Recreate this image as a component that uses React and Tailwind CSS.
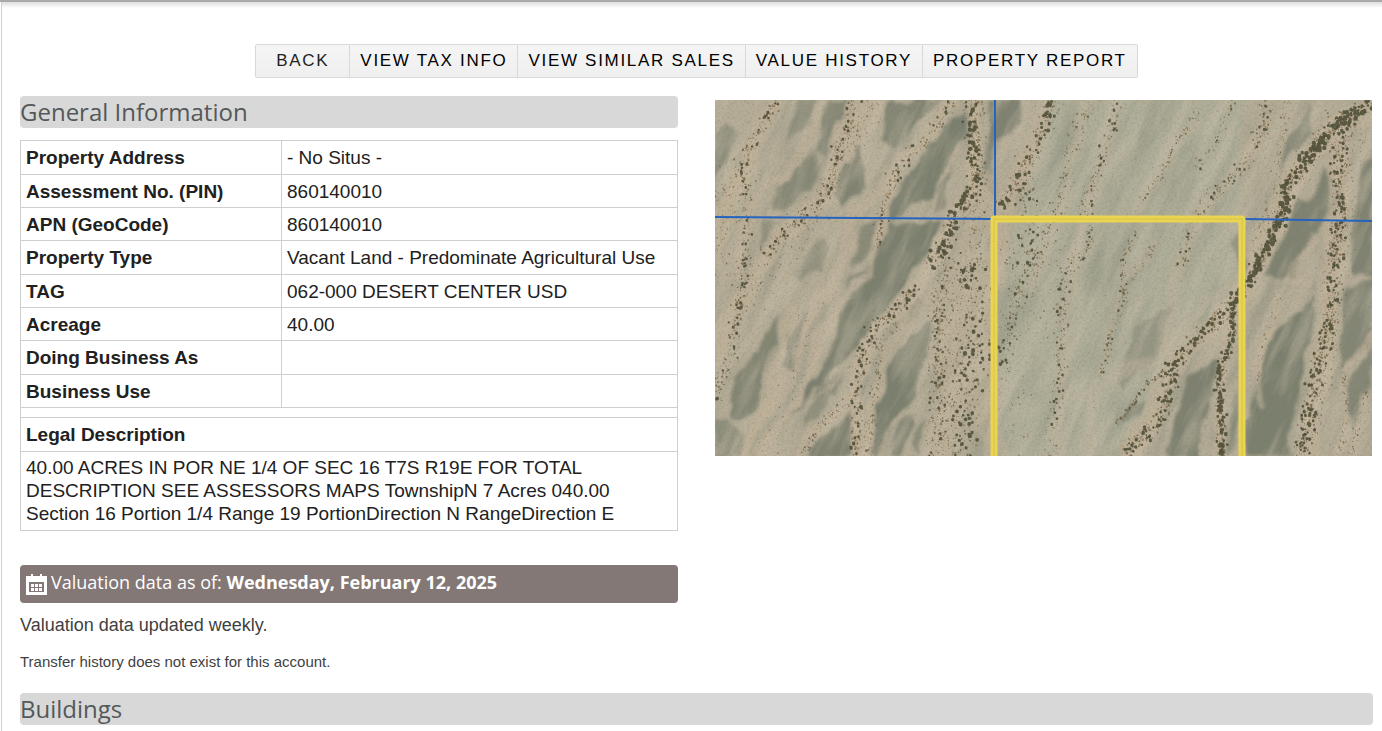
import React from 'react';

const NAV = ['BACK', 'VIEW TAX INFO', 'VIEW SIMILAR SALES', 'VALUE HISTORY', 'PROPERTY REPORT'];

const ROWS = [
  ['Property Address', '- No Situs -'],
  ['Assessment No. (PIN)', '860140010'],
  ['APN (GeoCode)', '860140010'],
  ['Property Type', 'Vacant Land - Predominate Agricultural Use'],
  ['TAG', '062-000 DESERT CENTER USD'],
  ['Acreage', '40.00'],
  ['Doing Business As', ''],
  ['Business Use', ''],
];

// Darker desert pavement between the washes: [opacity, polygon]
const PAVEMENT = [
  [0.6, '0,38 14,22 22,30 12,62 0,80'],
  [0.75, '95,47 100,67 97,87 70,113 58,112 66,87 80,70'],
  [0.7, '112,0 132,0 122,30 108,60 100,48'],
  [0.5, '84,0 100,0 92,30 72,42 78,18'],
  [0.8, '177,0 227,0 200,27 180,50 166,40'],
  [0.9, '143,43 153,67 150,87 130,110 122,94 127,70'],
  [1, '246,14 248,33 230,73 213,97 197,103 180,118 172,122 176,98 203,63 213,50'],
  [1, '172,125 233,120 213,150 193,180 178,195 133,180 157,163 167,140'],
  [0.9, '278,0 303,0 300,20 283,43 276,60'],
  [0.8, '236,74 240,60 230,105 218,112 224,90'],
  [0.5, '270,40 281,50 279,104 270,90'],
  [0.5, '95,145 112,138 110,170 88,180 78,172'],
  [0.6, '45,124 60,122 55,142 42,160'],
  [0.7, '148,124 164,122 158,148 136,168 140,140'],
  [1, '133,178 193,178 180,198 157,221 143,248 117,271 90,301 73,318 107,268 123,215'],
  [1, '215,220 212,265 200,291 167,335 160,356 152,350 163,311 170,271 187,245'],
  [0.85, '65,213 60,238 50,261 40,311 20,321 20,278 43,245'],
  [0.8, '90,208 86,235 74,270 66,268 72,230'],
  [0.9, '137,311 135,356 96,356 107,335'],
  [0.6, '105,285 130,275 120,295 90,330 88,316'],
  [0.6, '0,320 15,316 28,345 24,356 0,356'],
  [0.8, '197,312 180,330 175,356 188,356 200,328'],
  [0.7, '210,205 198,222 190,225 196,210 208,198'],
  [0.7, '212,313 212,340 202,356 200,345'],
  [0.8, '577,30 597,7 593,33 573,63 563,68'],
  [0.9, '617,70 623,100 607,133 583,157 577,180 550,180 563,133 583,107'],
  [0.9, '657,53 657,180 636,170 640,100 650,65'],
  [1, '600,195 593,245 583,285 577,321 577,356 532,356 532,305 543,278 557,238 577,215'],
  [0.95, '500,261 490,311 480,356 453,356 463,311 473,278'],
  [0.5, '457,205 447,245 403,291 407,268 420,228'],
  [0.8, '657,180 657,240 635,262 627,275 626,240 632,185'],
  [0.8, '657,245 655,290 645,320 637,340 634,300 640,270'],
  [0.7, '532,120 530,168 520,178 522,140'],
  [0.8, '522,285 522,340 512,356 515,300'],
  [0.6, '430,300 420,318 403,325 410,308'],
];

// Pale sandy channels: [width, opacity, path]
const CHANNELS = [
  [15, 0.8, 'M62 0C44 34 32 50 28 72S4 100 0 120'],
  [22, 0.7, 'M22 78C10 110 2 130 0 160'],
  [9, 0.75, 'M108 0C98 34 88 40 80 60S62 80 44 96 32 130 20 178'],
  [19, 0.8, 'M142 0C130 30 124 50 119 74S108 100 92 112 66 130 50 158 20 204 0 258'],
  [26, 0.65, 'M165 0C156 24 142 26 134 36'],
  [12, 0.75, 'M238 0C226 26 212 44 198 50S174 84 150 104 136 130 128 160 100 200 90 230 76 280 36 334 L28 356'],
  [10, 0.8, 'M178 80C170 110 166 130 158 160S128 190 112 224 100 270 82 300 58 330 44 356'],
  [15, 0.9, 'M256 0C258 26 260 50 259 74S250 104 240 112 232 140 218 164 200 184 184 206 158 222 150 252 142 290 141 356'],
  [9, 0.7, 'M220 190C200 220 168 238 166 268S158 300 150 356'],
  [9, 0.8, 'M140 290C128 310 110 318 90 344L84 356'],
  [11, 0.7, 'M75 206C66 236 64 270 48 310L32 356'],
  [30, 0.55, 'M268 80C262 140 240 200 238 260S238 320 224 356'],
  [28, 0.5, 'M282 356C260 300 264 240 274 180'],
  [18, 0.75, 'M333 0C326 34 310 60 294 98S286 140 284 180'],
  [10, 0.5, 'M376 0C360 40 350 80 344 110S330 150 316 186'],
  [11, 0.45, 'M404 0C396 50 374 90 364 140S346 220 344 356'],
  [10, 0.5, 'M480 20C450 54 444 80 424 110'],
  [14, 0.5, 'M550 20C540 58 500 90 484 118S468 160 454 220 424 250 400 278'],
  [24, 0.7, 'M657 12C620 20 612 40 590 64S574 98 560 124 544 164 524 194 480 238 460 260 446 300 432 324L416 356'],
  [20, 0.8, 'M632 20C622 62 622 90 621 120S610 200 612 228 592 300 592 356'],
  [9, 0.8, 'M515 230C502 240 508 280 505 310S508 340 500 356'],
  [8, 0.7, 'M565 194C556 220 546 250 542 270S542 300 546 302'],
  [6, 0.8, 'M657 236C640 256 628 266 630 290S632 330 622 356'],
  [8, 0.7, 'M657 270C652 300 642 320 638 356'],
  [9, 0.6, 'M600 140C588 160 576 164 574 180L590 184'],
  [8, 0.5, 'M440 140C424 170 408 178 398 220S376 290 372 356'],
  [9, 0.45, 'M520 178C490 196 470 230 450 250'],
  [3, 0.7, 'M136 270C124 284 104 296 90 308'],
  [3, 0.7, 'M200 305C186 314 174 324 166 336'],
  [2, 0.7, 'M150 30C158 60 146 84 156 92'],
  [2, 0.6, 'M90 40C102 70 98 94 96 106'],
  [4, 0.6, 'M246 50C230 62 232 90 222 110'],
];

// Shrub lines: [point list, spread, shrubs per pixel, largest radius]
const SHRUBS = [
  [[62, 0, 44, 32, 32, 48, 28, 72, 34, 110, 28, 180, 15, 260, 0, 300], 5, 1.3, 1.4],
  [[24, 60, 8, 110, 4, 180], 16, 1.1, 0.8],
  [[140, 0, 134, 28, 122, 50, 118, 76, 108, 102, 80, 122, 50, 155], 5, 1.4, 1.5],
  [[160, 0, 140, 30, 120, 80, 92, 120, 60, 160, 30, 200], 13, 1.2, 0.7],
  [[238, 0, 226, 20, 214, 38, 198, 52, 180, 74, 168, 110, 162, 150], 5, 1.2, 1.3],
  [[254, 0, 258, 26, 257, 52, 262, 72, 257, 94, 240, 112, 234, 140, 214, 166], 6, 2, 2.2],
  [[262, 0, 264, 60, 260, 110, 258, 160, 250, 185], 8, 1.2, 1.2],
  [[204, 188, 190, 200, 172, 214, 158, 228, 150, 248, 144, 270, 142, 310, 142, 356], 6, 1.7, 1.6],
  [[182, 224, 164, 244, 162, 280, 152, 356], 4, 1, 1],
  [[130, 300, 104, 326, 90, 356], 4, 1, 1],
  [[90, 210, 84, 280, 60, 320, 50, 356], 10, 0.5, 0.6],
  [[230, 150, 222, 220, 222, 280, 220, 356], 7, 1.6, 1.4],
  [[256, 160, 262, 230, 252, 290, 244, 356], 16, 1.9, 2],
  [[240, 160, 240, 260, 235, 356], 14, 1.2, 1],
  [[336, 0, 325, 32, 313, 66, 300, 86, 284, 108], 5, 1.5, 1.9],
  [[310, 80, 316, 120, 314, 170, 304, 200, 294, 230, 286, 270], 9, 1.2, 1.5],
  [[342, 0, 322, 50, 300, 98], 12, 0.8, 0.7],
  [[292, 140, 302, 180, 290, 230], 6, 0.8, 1.1],
  [[376, 0, 356, 48, 346, 100, 330, 140, 314, 180], 6, 1, 1.1],
  [[402, 0, 396, 38, 382, 74, 372, 104, 374, 144, 350, 176, 346, 236, 342, 300, 334, 356], 5, 1, 1.4],
  [[484, 12, 460, 44, 444, 78, 426, 100], 3, 0.9, 1],
  [[520, 0, 500, 42, 480, 70], 4, 0.6, 1.2],
  [[556, 0, 546, 34, 532, 62, 504, 90, 486, 114, 472, 134, 466, 168], 6, 1.2, 1.3],
  [[576, 0, 562, 58, 548, 130], 6, 0.7, 0.8],
  [[420, 130, 408, 162, 408, 200, 398, 228, 384, 280], 3, 0.9, 1.2],
  [[442, 142, 426, 164, 416, 180], 3, 0.8, 1],
  [[657, 4, 640, 12, 620, 26, 602, 46, 584, 70, 570, 84, 572, 100, 560, 128, 545, 160, 530, 186, 518, 206], 5, 3.4, 2.3],
  [[518, 204, 502, 220, 480, 240, 462, 260, 454, 280, 454, 300, 442, 326, 420, 342, 412, 356], 6, 2.4, 1.8],
  [[518, 210, 518, 242, 506, 264, 504, 300, 507, 330, 506, 356], 4, 2.6, 2],
  [[448, 270, 430, 286, 412, 312, 402, 324], 2, 1.2, 1.2],
  [[634, 12, 628, 40, 622, 70, 626, 110, 620, 150, 618, 178, 618, 210, 608, 252, 598, 290, 592, 330, 584, 356], 6, 2.4, 1.7],
  [[624, 10, 590, 70, 560, 120, 542, 160], 14, 1, 1],
  [[640, 20, 630, 120, 622, 210, 604, 300, 594, 356], 11, 0.9, 0.7],
  [[565, 196, 550, 240, 542, 280], 3, 0.4, 0.9],
  [[628, 270, 632, 310, 624, 356], 3, 0.6, 0.9],
  [[654, 280, 640, 330, 636, 356], 3, 0.7, 0.8],
  [[344, 120, 330, 200, 310, 270, 300, 356], 16, 0.3, 0.9],
];

function seeded(seed) {
  let s = seed;
  return () => {
    s = (s * 16807) % 2147483647;
    return s / 2147483647;
  };
}

function shrubPaths() {
  const rnd = seeded(4177);
  const tones = ['', '', ''];
  SHRUBS.forEach(([pts, spread, density, max]) => {
    for (let i = 0; i < pts.length - 2; i += 2) {
      const dx = pts[i + 2] - pts[i];
      const dy = pts[i + 3] - pts[i + 1];
      const len = Math.hypot(dx, dy);
      for (let n = 0; n < len * density; n++) {
        const t = rnd();
        const off = (rnd() + rnd() + rnd() - 1.5) * spread * 1.3;
        const x = pts[i] + dx * t + (off * dy) / len;
        const y = pts[i + 1] + dy * t - (off * dx) / len;
        const r = 0.4 + (max - 0.4) * Math.pow(rnd(), 2.6);
        const tone = r > 1.1 ? 0 : rnd() > 0.5 ? 1 : 2;
        const a = r.toFixed(1);
        tones[tone] += `M${(x - r).toFixed(1)} ${y.toFixed(1)}a${a} ${a} 0 1 0 ${(2 * r).toFixed(1)} 0a${a} ${a} 0 1 0-${(2 * r).toFixed(1)} 0`;
      }
    }
  });
  let fine = '';
  for (let n = 0; n < 1800; n++) {
    fine += `M${(rnd() * 657).toFixed(1)} ${(rnd() * 356).toFixed(1)}h.8v.8h-.8z`;
  }
  return { tones, fine };
}

const { tones, fine } = shrubPaths();

function ParcelMap() {
  return (
    <svg viewBox="0 0 657 356" className="block w-full" role="img" aria-label="Aerial parcel map">
      <defs>
        <filter id="rough" x="-5%" y="-5%" width="110%" height="110%" colorInterpolationFilters="sRGB">
          <feTurbulence type="fractalNoise" baseFrequency="0.045 0.025" numOctaves="4" seed="5" result="n" />
          <feDisplacementMap in="SourceGraphic" in2="n" scale="17" xChannelSelector="R" yChannelSelector="G" />
          <feGaussianBlur stdDeviation="1.5" />
        </filter>
        <filter id="soft" x="0" y="0" width="100%" height="100%">
          <feGaussianBlur stdDeviation="0.4" />
        </filter>
        <filter id="grain" x="0" y="0" width="100%" height="100%">
          <feTurbulence type="fractalNoise" baseFrequency="0.4" numOctaves="3" seed="9" />
          <feColorMatrix values="0 0 0 0 .2  0 0 0 0 .18  0 0 0 0 .13  1.6 0 0 0 -.65" />
        </filter>
        <filter id="wisps" x="0" y="0" width="100%" height="100%">
          <feTurbulence type="fractalNoise" baseFrequency="0.06 0.012" numOctaves="4" seed="14" />
          <feColorMatrix values="0 0 0 0 .6  0 0 0 0 .53  0 0 0 0 .41  3.4 0 0 0 -1.5" />
        </filter>
        <filter id="hollows" x="0" y="0" width="100%" height="100%">
          <feTurbulence type="fractalNoise" baseFrequency="0.045 0.01" numOctaves="4" seed="31" />
          <feColorMatrix values="0 0 0 0 .24  0 0 0 0 .26  0 0 0 0 .2  3.4 0 0 0 -1.6" />
        </filter>
        <clipPath id="frame">
          <rect width="657" height="356" />
        </clipPath>
      </defs>
      <g clipPath="url(#frame)">
        <rect width="657" height="356" fill="#b5ad97" />
        <path d="M340 0H530L520 180 400 356H284V180z" fill="#b0af9a" filter="url(#rough)" />
        <g transform="rotate(24 328 178)">
          <rect x="-80" y="-160" width="820" height="680" filter="url(#hollows)" opacity=".4" />
        </g>
        <g filter="url(#rough)" fill="#7c806f">
          {PAVEMENT.map(([o, p]) => (
            <polygon key={p} points={p} opacity={o} />
          ))}
        </g>
        <g filter="url(#rough)" fill="none" stroke="#c2b39b" strokeLinecap="round">
          {CHANNELS.map(([w, o, d]) => (
            <path key={d} d={d} strokeWidth={w * 0.9} opacity={o * 0.85} />
          ))}
        </g>
        <g transform="rotate(24 328 178)">
          <rect x="-80" y="-160" width="820" height="680" filter="url(#wisps)" opacity=".4" />
        </g>
        <rect width="657" height="356" filter="url(#grain)" opacity=".3" />
        <g filter="url(#soft)">
          <path d={fine} fill="#75674b" opacity=".5" />
          <path d={tones[2]} fill="#86704f" opacity=".75" />
          <path d={tones[1]} fill="#655a41" opacity=".8" />
          <path d={tones[0]} fill="#4a4a34" opacity=".85" />
        </g>
        <g fill="none" stroke="#2563c0" strokeWidth="2">
          <path d="M280 0V117" />
          <path d="M0 117L278 119" />
          <path d="M530 119L657 121" />
        </g>
        <path d="M279 360V119H527V360" fill="none" stroke="#ead552" strokeWidth="7" strokeLinejoin="round" />
        <path d="M279 360V119H527V360" fill="none" stroke="#e0cb4a" strokeWidth="2" />
      </g>
    </svg>
  );
}

function CalendarIcon() {
  return (
    <svg viewBox="0 0 21 21" className="h-[21px] w-[21px] shrink-0" aria-hidden="true">
      <path d="M0 2H5V0H7V2H14V0H16V2H21V21H0Z" fill="#fff" />
      <path d="M3 8H18V18H3Z" fill="#837876" />
      <path
        d="M5 10h3v3H5zM9 10h3v3h-3zM13 10h3v3h-3zM5 14h3v3H5zM9 14h3v3h-3zM13 14h3v3h-3z"
        fill="#fff"
      />
    </svg>
  );
}

function SectionHeading({ children }) {
  return (
    <h2 className="h-8 rounded bg-[#d8d8d8] font-['Open_Sans',sans-serif] text-[24px] leading-8 text-[#54585a]">
      {children}
    </h2>
  );
}

export default function App() {
  return (
    <div className="min-h-screen border-t-2 border-[#aaa] bg-white pl-px font-['Liberation_Sans',Arial,sans-serif] text-[#212121]">
      <main className="min-h-screen border-l border-[#d0d0d0] bg-[linear-gradient(#ddd,#fff_6px)] pt-[42px] pr-[9px] pl-[18px]">
        <nav className="flex justify-center">
          <div className="flex rounded-xs border border-[#d9d9d9] bg-linear-to-b from-[#f5f5f5] to-[#efefef]">
            {NAV.map((label, i) => (
              <a
                key={label}
                href="#"
                className={
                  i === 0
                    ? 'px-5 text-[17px] leading-8 tracking-widest text-[#222]'
                    : 'border-l border-[#d9d9d9] px-[10px] text-[17px] leading-8 tracking-widest text-black'
                }
              >
                {label}
              </a>
            ))}
          </div>
        </nav>

        <div className="mt-[18px] grid grid-cols-2 gap-[37px]">
          <section>
            <SectionHeading>General Information</SectionHeading>
            <table className="mt-3 w-full table-fixed border-collapse text-left text-[19px] leading-[23px] [&_td]:border [&_td]:border-[#cfcfcf] [&_th]:border [&_th]:border-[#cfcfcf]">
              <colgroup>
                <col className="w-[261px]" />
                <col />
              </colgroup>
              <tbody>
                {ROWS.map(([label, value]) => (
                  <tr key={label} className="h-[33px] nth-[3n+1]:h-[34px]">
                    <th scope="row" className="px-[5px] font-bold">{label}</th>
                    <td className="px-[5px]">{value}</td>
                  </tr>
                ))}
                <tr className="h-[10px]">
                  <td colSpan={2} className="p-0" />
                </tr>
                <tr className="h-[34px]">
                  <th colSpan={2} className="px-[5px] font-bold">Legal Description</th>
                </tr>
                <tr className="h-[79px]">
                  <td colSpan={2} className="px-[5px] pt-1 pb-[5px]">
                    40.00 ACRES IN POR NE 1/4 OF SEC 16 T7S R19E FOR TOTAL
                    <br />
                    DESCRIPTION SEE ASSESSORS MAPS TownshipN 7 Acres 040.00
                    <br />
                    Section 16 Portion 1/4 Range 19 PortionDirection N RangeDirection E
                  </td>
                </tr>
              </tbody>
            </table>
          </section>
          <div className="pt-1 pr-px">
            <ParcelMap />
          </div>
        </div>

        <div className="mt-[34px] grid grid-cols-2 gap-[37px]">
          <section>
            <p className="flex h-[38px] items-center gap-1 rounded bg-[#837876] px-[6px] font-['Open_Sans',sans-serif] text-[18px] font-medium text-white">
              <CalendarIcon />
              <span className="pb-1">
                Valuation data as of: <strong className="font-bold">Wednesday, February 12, 2025</strong>
              </span>
            </p>
            <p className="mt-3 text-[18px] leading-5 text-[#3f3f3f]">Valuation data updated weekly.</p>
            <p className="mt-[17px] text-[15px] leading-5 text-[#3f3f3f]">Transfer history does not exist for this account.</p>
          </section>
        </div>

        <section className="mt-[21px]">
          <SectionHeading>Buildings</SectionHeading>
        </section>
      </main>
    </div>
  );
}
